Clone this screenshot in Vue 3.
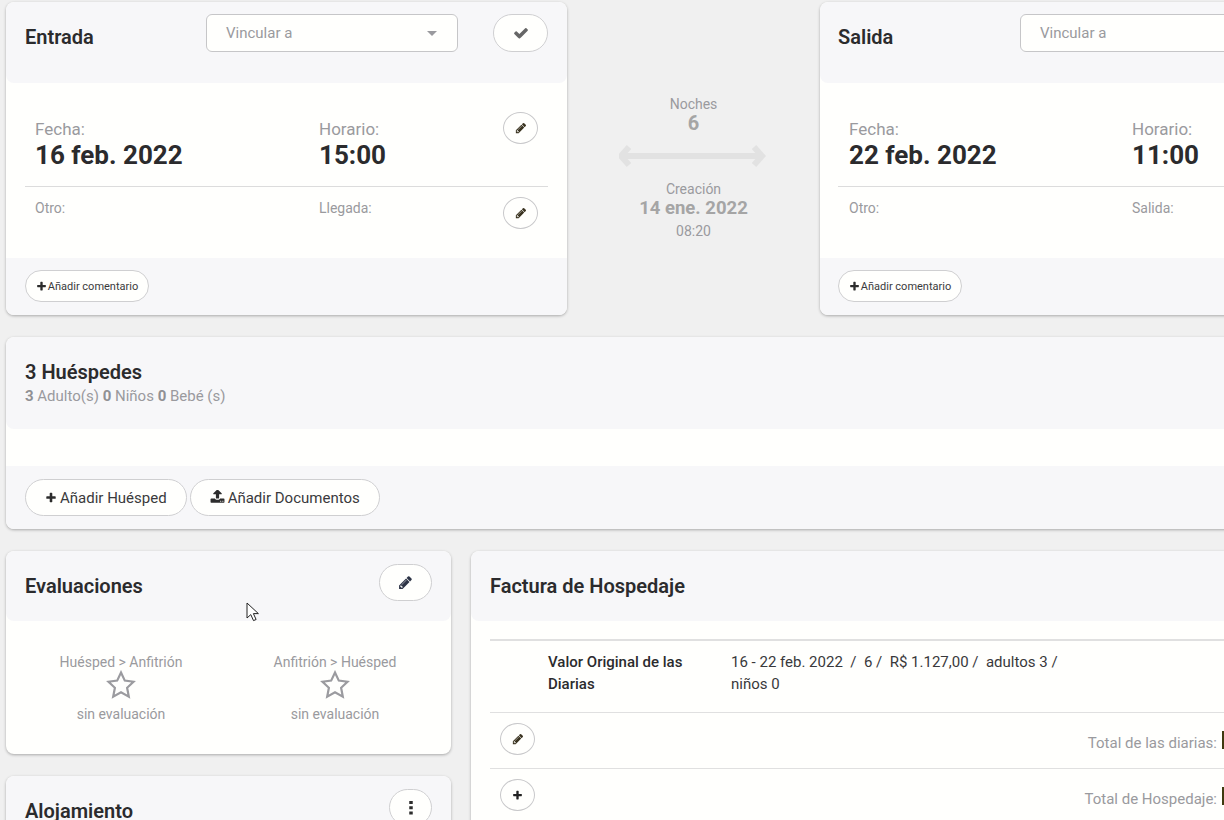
<script setup>
const stays = [
  { title: 'Entrada', date: '16 feb. 2022', time: '15:00', other: 'Llegada:' },
  { title: 'Salida', date: '22 feb. 2022', time: '11:00', other: 'Salida:' },
]
const reviews = ['Huésped > Anfitrión', 'Anfitrión > Huésped']
const pencil = 'M491 1536l91-91-235-235-91 91v107h128v128h107zm523-928q0-22-22-22-10 0-17 7l-542 542q-7 7-7 17 0 22 22 22 10 0 17-7l542-542q7-7 7-17zm-54-192l416 416-832 832h-416v-416zm683 96q0 53-37 90l-166 166-416-416 166-165q36-38 90-38 53 0 91 38l235 234q37 39 37 91z'
const plus = 'M1600 736v192q0 40-28 68t-68 28h-416v416q0 40-28 68t-68 28h-192q-40 0-68-28t-28-68v-416h-416q-40 0-68-28t-28-68v-192q0-40 28-68t68-28h416v-416q0-40 28-68t68-28h192q40 0 68 28t28 68v416h416q40 0 68 28t28 68z'
const check = 'M1671 566q0 40-28 68l-724 724-136 136q-28 28-68 28t-68-28l-136-136-362-362q-28-28-28-68t28-68l136-136q28-28 68-28t68 28l294 295 656-657q28-28 68-28t68 28l136 136q28 28 28 68z'
const upload = 'M1344 1344q0-26-19-45t-45-19-45 19-19 45 19 45 45 19 45-19 19-45zm256 0q0-26-19-45t-45-19-45 19-19 45 19 45 45 19 45-19 19-45zm128-224v320q0 40-28 68t-68 28h-1472q-40 0-68-28t-28-68v-320q0-40 28-68t68-28h427q21 56 70.500 92t110.500 36h256q61 0 110.500-36t70.500-92h427q40 0 68 28t28 68zm-325-648q-17 40-59 40h-256v448q0 26-19 45t-45 19h-256q-26 0-45-19t-19-45v-448h-256q-42 0-59-40-17-39 14-69l448-448q18-19 45-19t45 19l448 448q31 30 14 69z'
</script>

<template>
  <div class="page">
    <section class="top-row">
      <template v-for="(stay, i) in stays" :key="stay.title">
        <article class="card stay" :class="{ alt: i === 1 }">
          <header class="head stay-head">
            <h2>{{ stay.title }}</h2>
            <div class="select">
              <span>Vincular a</span>
              <i class="caret"></i>
            </div>
            <button class="pill check">
              <svg viewBox="0 0 1792 1792" width="16" height="16"><path :d="check" fill="#666" /></svg>
            </button>
          </header>
          <div class="stay-body">
            <div class="main-line">
              <div class="col-a"><label class="big-label">Fecha:</label><strong>{{ stay.date }}</strong></div>
              <div class="col-b"><label class="big-label">Horario:</label><strong>{{ stay.time }}</strong></div>
              <button class="round"><svg viewBox="0 0 1792 1792" width="12" height="12"><path :d="pencil" fill="#3a3320" /></svg></button>
            </div>
            <div class="sub-line">
              <div class="col-a small-label">Otro:</div>
              <div class="col-b small-label">{{ stay.other }}</div>
              <button class="round"><svg viewBox="0 0 1792 1792" width="12" height="12"><path :d="pencil" fill="#3a3320" /></svg></button>
            </div>
          </div>
          <footer class="stay-foot">
            <button class="pill comment">
              <svg viewBox="0 0 1792 1792" width="11" height="11"><path :d="plus" fill="#2c2c2c" /></svg>
              Añadir comentario
            </button>
          </footer>
        </article>
        <aside v-if="i === 0" class="between">
          <div class="nights-label">Noches</div>
          <div class="nights">6</div>
          <svg class="arrow" viewBox="0 0 150 24" width="150" height="24">
            <path d="M10 3L2 12l8 9M135 3l8 9-8 9M3 12h139" fill="none" stroke="#e2e2e2" stroke-width="6" />
          </svg>
          <div class="created-label">Creación</div>
          <div class="created">14 ene. 2022</div>
          <div class="created-time">08:20</div>
        </aside>
      </template>
    </section>

    <article class="card guests">
      <header class="head guests-head">
        <h2>3 Huéspedes</h2>
        <p><b>3</b> Adulto(s) <b>0</b> Niños <b>0</b> Bebé (s)</p>
      </header>
      <div class="guests-body"></div>
      <footer class="guests-foot">
        <button class="pill add">
          <svg viewBox="0 0 1792 1792" width="12" height="12"><path :d="plus" fill="#2c2c2c" /></svg>
          Añadir Huésped
        </button>
        <button class="pill add doc">
          <svg viewBox="0 0 1792 1792" width="15" height="15"><path :d="upload" fill="#2c2c2c" /></svg>
          Añadir Documentos
        </button>
      </footer>
    </article>

    <section class="bottom-row">
      <div class="left-col">
        <article class="card reviews">
          <header class="head reviews-head">
            <h2>Evaluaciones</h2>
            <button class="pill head-btn">
              <svg viewBox="0 0 1792 1792" width="15" height="15"><path :d="pencil" fill="#2d3446" /></svg>
            </button>
          </header>
          <div class="reviews-body">
            <div v-for="r in reviews" :key="r" class="review">
              <div>{{ r }}</div>
              <svg viewBox="0 0 30 29" width="30" height="29">
                <path d="M15 2.500l3.800 8.100 8.700 1.100-6.400 6.100 1.700 8.800-7.800-4.300-7.800 4.300 1.700-8.800-6.400-6.100 8.700-1.100z" fill="none" stroke="#9b9b9f" stroke-width="2.200" />
              </svg>
              <div class="no-review">sin evaluación</div>
            </div>
          </div>
        </article>
        <article class="card lodging">
          <header class="head lodging-head">
            <h2>Alojamiento</h2>
            <button class="pill more">
              <svg viewBox="0 0 4 16" width="4" height="14"><path d="M0 0h4v3.500H0zM0 6h4v3.500H0zM0 12h4v3.500H0z" fill="#2c2c2c" /></svg>
            </button>
          </header>
        </article>
      </div>

      <article class="card invoice">
        <header class="head invoice-head"><h2>Factura de Hospedaje</h2></header>
        <div class="invoice-body">
          <div class="inv-line first">
            <div class="inv-name">Valor Original de las Diarias</div>
            <div class="inv-desc">16 - 22 feb. 2022 &nbsp;/&nbsp; 6 / &nbsp;R$ 1.127,00 / &nbsp;adultos 3 / niños 0</div>
          </div>
          <div class="inv-line total">
            <button class="round inv-btn"><svg viewBox="0 0 1792 1792" width="12" height="12"><path :d="pencil" fill="#3a3320" /></svg></button>
            <span class="total-label">Total de las diarias:</span><i class="mark"></i>
          </div>
          <div class="inv-line total">
            <button class="round inv-btn"><svg viewBox="0 0 1792 1792" width="11" height="11"><path :d="plus" fill="#222" /></svg></button>
            <span class="total-label">Total de Hospedaje:</span><i class="mark"></i>
          </div>
        </div>
      </article>
    </section>

    <svg class="cursor" viewBox="0 0 14 20" width="14" height="20">
      <path d="M1 1v15l3.800-3.400 2.700 6 2.600-1.100-2.700-5.900h5z" fill="#fff" stroke="#222" stroke-width="1" />
    </svg>
  </div>
</template>

<style>
html, body { margin: 0; height: 820px; overflow: hidden; background: #f0f0f0; }
</style>

<style scoped>
* { box-sizing: border-box; }
.page {
  position: relative;
  width: 1224px;
  height: 820px;
  overflow: hidden;
  padding: 2px 0 0 6px;
  background: #f0f0f0;
  font-family: Roboto, "Liberation Sans", sans-serif;
  color: #9a9a9e;
}
.card {
  background: #fffffd;
  border-radius: 8px;
  box-shadow: 0 1px 3px rgba(0, 0, 0, 0.3);
  overflow: hidden;
  flex: none;
}
.head { background: #f7f7f9; border-radius: 8px; }
h2 { margin: 0; font-size: 20px; line-height: 24px; font-weight: 600; color: #2b2b2d; }
button { font-family: inherit; padding: 0; cursor: pointer; background: #fff; }
.pill {
  display: inline-flex;
  align-items: center;
  justify-content: center;
  border: 1px solid #cfcfd1;
  border-radius: 20px;
  background: #fffffd;
}
.round {
  flex: none;
  width: 35px;
  height: 32px;
  border: 1px solid #c8c8ca;
  border-radius: 50%;
  display: flex;
  align-items: center;
  justify-content: center;
  background: #fffffd;
}

.top-row { display: flex; width: 1375px; height: 313px; }
.stay { width: 561px; height: 313px; display: flex; flex-direction: column; }
.stay-head { height: 81px; display: flex; align-items: flex-start; padding: 12px 19px 0; }
.stay-head h2 { width: 181px; margin-top: 11px; }
.select {
  width: 252px;
  height: 38px;
  margin-right: 35px;
  padding: 0 19px;
  display: flex;
  align-items: center;
  justify-content: space-between;
  border: 1px solid #c6c6c8;
  border-radius: 6px;
  background: #fffffd;
  font-size: 15px;
  color: #9a9a9e;
}
.caret { width: 0; height: 0; border: 5px solid transparent; border-top: 5px solid #9a9a9e; border-bottom: 0; margin-right: 1px; }
.check { width: 55px; height: 38px; }
.stay-body { height: 175px; padding: 0 19px; }
.main-line { display: flex; height: 104px; padding-top: 29px; border-bottom: 1px solid #dcdcdc; }
.sub-line { display: flex; padding-top: 10px; }
.col-a { width: 294px; padding-left: 10px; }
.col-b { width: 184px; }
.main-line .col-a, .main-line .col-b { padding-top: 7px; }
.sub-line .col-a, .sub-line .col-b { margin-top: -1px; }
.big-label { display: block; font-size: 17px; line-height: 20px; color: #9a9a9e; }
strong { display: block; font-size: 26px; line-height: 32px; font-weight: 700; color: #2b2b2d; }
.small-label { font-size: 14px; line-height: 24px; color: #9a9a9e; }
.stay-foot { flex: 1; background: #f7f7f9; padding: 12px 19px 0; }
.comment { height: 32px; width: 124px; gap: 1px; font-size: 11px; color: #3a3a3c; }

.alt .stay-head { padding-left: 18px; }
.alt .stay-head h2 { width: 182px; }
.alt .stay-body { padding-left: 18px; }
.alt .col-a { padding-left: 11px; }
.alt .stay-foot { padding-left: 18px; }

.between { width: 253px; display: flex; flex-direction: column; align-items: center; padding-top: 94px; flex: none; text-align: center; }
.nights-label { font-size: 14px; line-height: 17px; }
.nights { font-size: 20px; line-height: 20px; font-weight: 700; color: #a5a5a5; }
.arrow { margin-top: 11px; width: 150px; }
.created-label { margin-top: 13px; font-size: 14px; line-height: 17px; }
.created { font-size: 18.500px; line-height: 20px; font-weight: 700; color: #a5a5a5; }
.created-time { margin-top: 5px; font-size: 14px; line-height: 17px; }

.guests { width: 1375px; height: 192px; margin-top: 22px; display: flex; flex-direction: column; }
.guests-head { height: 92px; padding: 23px 19px 0; }
.guests-head p { margin: 3px 0 0; font-size: 15px; line-height: 19px; color: #9a9a9e; }
.guests-head b { font-weight: 700; color: #909094; }
.guests-body { height: 37px; }
.guests-foot { flex: 1; background: #f7f7f9; padding: 13px 19px 0; display: flex; gap: 3px; }
.add { height: 37px; padding: 0 19px; gap: 3px; font-size: 15px; color: #3a3a3c; }

.bottom-row { display: flex; align-items: flex-start; gap: 20px; margin-top: 22px; }
.left-col { width: 445px; flex: none; display: flex; flex-direction: column; gap: 22px; }
.reviews { width: 445px; height: 203px; }
.reviews-head { height: 70px; padding: 13px 19px 0; display: flex; justify-content: space-between; align-items: flex-start; }
.reviews-head h2 { margin-top: 10px; }
.head-btn { width: 53px; height: 37px; }
.reviews-body { display: flex; padding-top: 32px; }
.review { width: 214px; flex: none; margin-left: 8px; margin-right: -8px; display: flex; flex-direction: column; align-items: center; font-size: 14px; line-height: 18px; color: #9a9a9e; }
.review svg { margin-top: -1px; }
.no-review { margin-top: 6px; }
.lodging { width: 445px; height: 120px; }
.lodging-head { height: 120px; padding: 13px 19px 0; display: flex; justify-content: space-between; align-items: flex-start; }
.lodging-head h2 { margin-top: 10px; }
.more { width: 43px; height: 37px; }

.invoice { width: 910px; height: 400px; }
.invoice-head { height: 70px; padding: 23px 19px 0; }
.invoice-body { padding: 18px 19px 0; width: 880px; }
.inv-line { border-top: 1px solid #e0e0e0; }
.inv-line.first { border-top-width: 2px; display: flex; height: 73px; padding: 10px 0 0 58px; font-size: 15px; line-height: 22px; color: #39393b; }
.inv-name { width: 183px; padding-right: 30px; font-weight: 500; color: #2b2b2d; }
.inv-desc { width: 340px; }
.total { height: 56px; position: relative; padding: 10px 0 0 10px; }
.inv-btn { width: 35px; }
.total-label { position: absolute; left: 0; width: 727px; top: 20px; text-align: right; font-size: 15px; line-height: 20px; }
.mark { position: absolute; left: 732px; top: 18px; width: 2px; height: 18px; background: #3f3a10; }

.cursor { position: absolute; left: 246px; top: 602px; }
</style>
